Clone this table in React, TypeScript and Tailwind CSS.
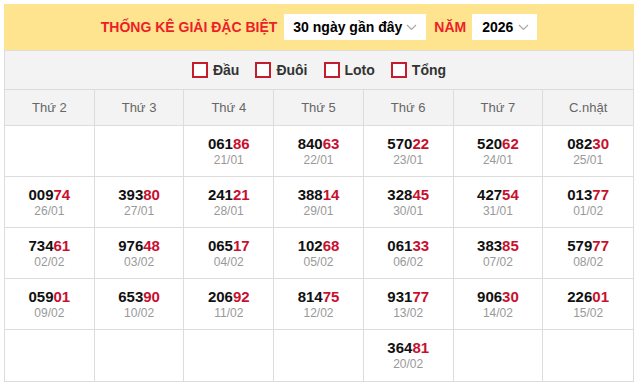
import React from "react";

const days = ["Thứ 2", "Thứ 3", "Thứ 4", "Thứ 5", "Thứ 6", "Thứ 7", "C.nhật"];

type Cell = { n: string; d: string } | null;

const rows: Cell[][] = [
  [null, null, { n: "06186", d: "21/01" }, { n: "84063", d: "22/01" }, { n: "57022", d: "23/01" }, { n: "52062", d: "24/01" }, { n: "08230", d: "25/01" }],
  [{ n: "00974", d: "26/01" }, { n: "39380", d: "27/01" }, { n: "24121", d: "28/01" }, { n: "38814", d: "29/01" }, { n: "32845", d: "30/01" }, { n: "42754", d: "31/01" }, { n: "01377", d: "01/02" }],
  [{ n: "73461", d: "02/02" }, { n: "97648", d: "03/02" }, { n: "06517", d: "04/02" }, { n: "10268", d: "05/02" }, { n: "06133", d: "06/02" }, { n: "38385", d: "07/02" }, { n: "57977", d: "08/02" }],
  [{ n: "05901", d: "09/02" }, { n: "65390", d: "10/02" }, { n: "20692", d: "11/02" }, { n: "81475", d: "12/02" }, { n: "93177", d: "13/02" }, { n: "90630", d: "14/02" }, { n: "22601", d: "15/02" }],
  [null, null, null, null, { n: "36481", d: "20/02" }, null, null],
];

function Chevron() {
  return (
    <svg width="11" height="7" viewBox="0 0 11 7" fill="none" className="ml-auto">
      <path d="M1 1l4.5 4.5L10 1" stroke="#a8a8a8" strokeWidth="1.2" />
    </svg>
  );
}

function Check({ label }: { label: string }) {
  return (
    <label className="flex items-center gap-[5px]">
      <span className="block w-[16px] h-[16px] border-2 border-[#c41e2e] bg-white" />
      <span className="text-[14px] font-bold text-[#333]">{label}</span>
    </label>
  );
}

export default function App() {
  return (
    <div className="p-[4px] bg-white" style={{ fontFamily: '"Liberation Sans", Arial, sans-serif' }}>
      <div className="w-[630px]">
        <div className="h-[46px] bg-[#ffe48f] flex items-center justify-center">
          <span className="text-[14px] font-bold text-[#ec2029] mr-[7px]">THỐNG KÊ GIẢI ĐẶC BIỆT</span>
          <div className="w-[142px] h-[26px] bg-white flex items-center pl-[9px] pr-[9px] text-[14px] font-bold text-black">
            <span>30 ngày gần đây</span>
            <Chevron />
          </div>
          <span className="text-[14px] font-bold text-[#ec2029] ml-[8px] mr-[6px]">NĂM</span>
          <div className="w-[65px] h-[26px] bg-white flex items-center pl-[10px] pr-[8px] text-[14px] font-bold text-black">
            <span>2026</span>
            <Chevron />
          </div>
        </div>
        <div className="border border-[#dcdcdc]">
          <div className="h-[39px] bg-[#f3f3f3] flex items-center justify-center gap-[16px] border-b border-[#dcdcdc]">
            <Check label="Đầu" />
            <Check label="Đuôi" />
            <Check label="Loto" />
            <Check label="Tổng" />
          </div>
          <div className="grid grid-cols-7 bg-[#f3f3f3]">
            {days.map((d, i) => (
              <div
                key={d}
                className={`h-[36px] flex items-center justify-center text-[13px] text-[#666] border-b border-[#dcdcdc] ${i < 6 ? "border-r" : ""}`}
              >
                {d}
              </div>
            ))}
          </div>
          {rows.map((r, ri) => (
            <div key={ri} className="grid grid-cols-7 bg-white">
              {r.map((c, ci) => (
                <div
                  key={ci}
                  className={`h-[51px] flex flex-col items-center justify-center border-[#dcdcdc] ${ci < 6 ? "border-r" : ""} ${ri < 4 ? "border-b" : ""}`}
                >
                  {c && (
                    <>
                      <div className="text-[15px] font-bold leading-[18px] text-[#111]">
                        {c.n.slice(0, 3)}
                        <span className="text-[#c8102e]">{c.n.slice(3)}</span>
                      </div>
                      <div className="text-[12px] leading-[15px] text-[#999]">{c.d}</div>
                    </>
                  )}
                </div>
              ))}
            </div>
          ))}
        </div>
      </div>
    </div>
  );
}
